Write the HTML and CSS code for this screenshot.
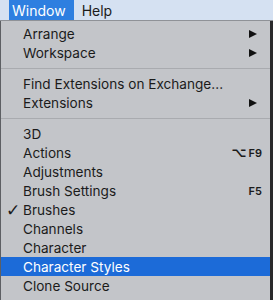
FILE: index.html
```html
<!DOCTYPE html>
<html lang="en">
<head>
    <meta charset="UTF-8">
    <meta name="viewport" content="width=device-width, initial-scale=1.0">
    <title>Window Menu</title>
    <link rel="stylesheet" href="styles.css">
</head>
<body>
    <div class="menubar">
        <span class="title active">Window</span>
        <span class="title">Help</span>
    </div>
    <ul class="menu">
        <li class="item">Arrange<span class="arrow"></span></li>
        <li class="item">Workspace<span class="arrow"></span></li>
        <li class="sep"></li>
        <li class="item">Find Extensions on Exchange...</li>
        <li class="item">Extensions<span class="arrow"></span></li>
        <li class="sep"></li>
        <li class="item">3D</li>
        <li class="item">Actions<span class="key"><span class="opt">&#8997;</span>F9</span></li>
        <li class="item">Adjustments</li>
        <li class="item">Brush Settings<span class="key">F5</span></li>
        <li class="item"><span class="check">&#10003;</span>Brushes</li>
        <li class="item">Channels</li>
        <li class="item">Character</li>
        <li class="item selected">Character Styles</li>
        <li class="item">Clone Source</li>
        <li class="item">Color</li>
    </ul>
</body>
</html>
```
FILE: styles.css
```css
body {
    margin: 0;
    height: 300px;
    overflow: hidden;
    background: #2a2a2c;
    font-family: Inter, "Liberation Sans", sans-serif;
    font-size: 13.6px;
    color: #1b1b1b;
}
.menubar {
    display: flex;
    height: 20px;
    padding-left: 9px;
    background: #d5e1f2;
    border-bottom: 1px solid #8f9297;
    font-size: 14px;
}
.title {
    display: flex;
    align-items: center;
    padding: 0 8px;
}
.title.active {
    background: #2e7fe0;
    color: #fff;
    padding: 0 8px 0 3px;
}
.menu {
    list-style: none;
    margin: 0;
    padding: 3px 0;
    width: 269px;
    background: #c3c5c9;
    border-left: 1px solid #5d5f63;
}
.item {
    position: relative;
    display: flex;
    align-items: center;
    height: 19px;
    padding-left: 22px;
    padding-right: 8px;
}
.item.selected {
    background: #1c6bd8;
    color: #fff;
}
.sep {
    height: 12px;
    display: flex;
    align-items: center;
}
.sep::before {
    content: "";
    flex: 1;
    height: 1px;
    background: #a9abaf;
}
.arrow {
    margin-left: auto;
    margin-right: 5px;
    width: 0;
    height: 0;
    border-top: 4.5px solid transparent;
    border-bottom: 4.5px solid transparent;
    border-left: 8px solid #111;
}
.key {
    margin-left: auto;
    font-size: 11px;
    font-weight: 600;
}
.opt {
    font-family: "DejaVu Sans", sans-serif;
    font-size: 13px;
    margin-right: 2px;
}
.check {
    position: absolute;
    left: 5px;
    font-family: "DejaVu Sans", sans-serif;
    font-size: 17px;
    font-weight: bold;
}
```
